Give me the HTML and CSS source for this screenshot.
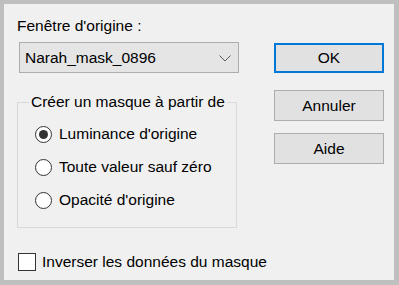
FILE: index.html
```html
<!DOCTYPE html>
<html lang="fr">

<head>
    <meta charset="UTF-8">
    <title>Créer un masque</title>
    <link rel="stylesheet" href="styles.css">
</head>

<body>
    <div class="dialog">
        <div class="main">
            <div class="left">
                <div class="field-label">Fenêtre d'origine :</div>
                <div class="combo">
                    <span>Narah_mask_0896</span>
                    <svg class="chevron" width="12" height="7" viewBox="0 0 12 7">
                        <polyline points="0.5,0.5 6,6 11.5,0.5" fill="none" stroke="#5a5a5a" stroke-width="1"/>
                    </svg>
                </div>
                <fieldset class="group">
                    <legend>Créer un masque à partir de</legend>
                    <label class="radio"><span class="circle checked"></span>Luminance d'origine</label>
                    <label class="radio"><span class="circle"></span>Toute valeur sauf zéro</label>
                    <label class="radio"><span class="circle"></span>Opacité d'origine</label>
                </fieldset>
            </div>
            <div class="buttons">
                <button class="btn default">OK</button>
                <button class="btn">Annuler</button>
                <button class="btn">Aide</button>
            </div>
        </div>
        <label class="check"><span class="box"></span>Inverser les données du masque</label>
    </div>
</body>

</html>
```

FILE: styles.css
```css
body {
    margin: 0;
    padding: 0;
    background-color: #bfbfbf;
    font-family: "Liberation Sans", Arial, sans-serif;
    font-size: 15.5px;
    line-height: 18px;
    color: #000;
}

.dialog {
    box-sizing: border-box;
    width: 399px;
    height: 285px;
    border-style: solid;
    border-color: #bfbfbf;
    border-width: 4px 5px 5px 4px;
    background-color: #f0f0f0;
    display: flex;
    flex-direction: column;
}

.main {
    display: flex;
}

.left {
    margin-left: 13px;
    padding-top: 13px;
    width: 221px;
}

.field-label {
    height: 18px;
}

.combo {
    box-sizing: border-box;
    margin-top: 7px;
    margin-left: 2px;
    width: 220px;
    height: 31px;
    border: 1px solid #adadad;
    background-color: #e5e5e5;
    display: flex;
    align-items: center;
    justify-content: space-between;
    padding: 1px 7px 0 5px;
}

.chevron {
    display: block;
}

.group {
    box-sizing: border-box;
    margin: 20px 0 0 0;
    width: 220px;
    padding: 14px 0 18px 11px;
    border: 1px solid #d9d9d9;
    display: flex;
    flex-direction: column;
    gap: 15px;
}

.group legend {
    padding: 0 2px;
    line-height: 18px;
}

.radio {
    display: flex;
    align-items: center;
    height: 18px;
    margin-left: 6px;
}

.circle {
    box-sizing: border-box;
    width: 17px;
    height: 17px;
    border: 1px solid #333;
    border-radius: 50%;
    background-color: #fff;
    margin-right: 7px;
    display: flex;
    align-items: center;
    justify-content: center;
}

.circle.checked::after {
    content: "";
    width: 9px;
    height: 9px;
    border-radius: 50%;
    background-color: #333;
}

.buttons {
    margin-left: auto;
    margin-right: 10px;
    padding-top: 39px;
    width: 110px;
    display: flex;
    flex-direction: column;
}

.btn {
    box-sizing: border-box;
    width: 110px;
    height: 31px;
    border: 1px solid #adadad;
    background-color: #e1e1e1;
    font-family: inherit;
    font-size: inherit;
    color: #000;
    padding: 0;
}

.btn.default {
    border: 2px solid #0078d7;
    height: 30px;
    margin-bottom: 17px;
}

.btn + .btn {
    margin-top: 0;
}

.buttons .btn:last-child {
    margin-top: 12px;
}

.check {
    display: flex;
    align-items: center;
    margin-top: 25px;
    margin-left: 14px;
    height: 18px;
}

.box {
    box-sizing: border-box;
    width: 18px;
    height: 18px;
    border: 1px solid #333;
    background-color: #fff;
    margin-right: 6px;
}
```
